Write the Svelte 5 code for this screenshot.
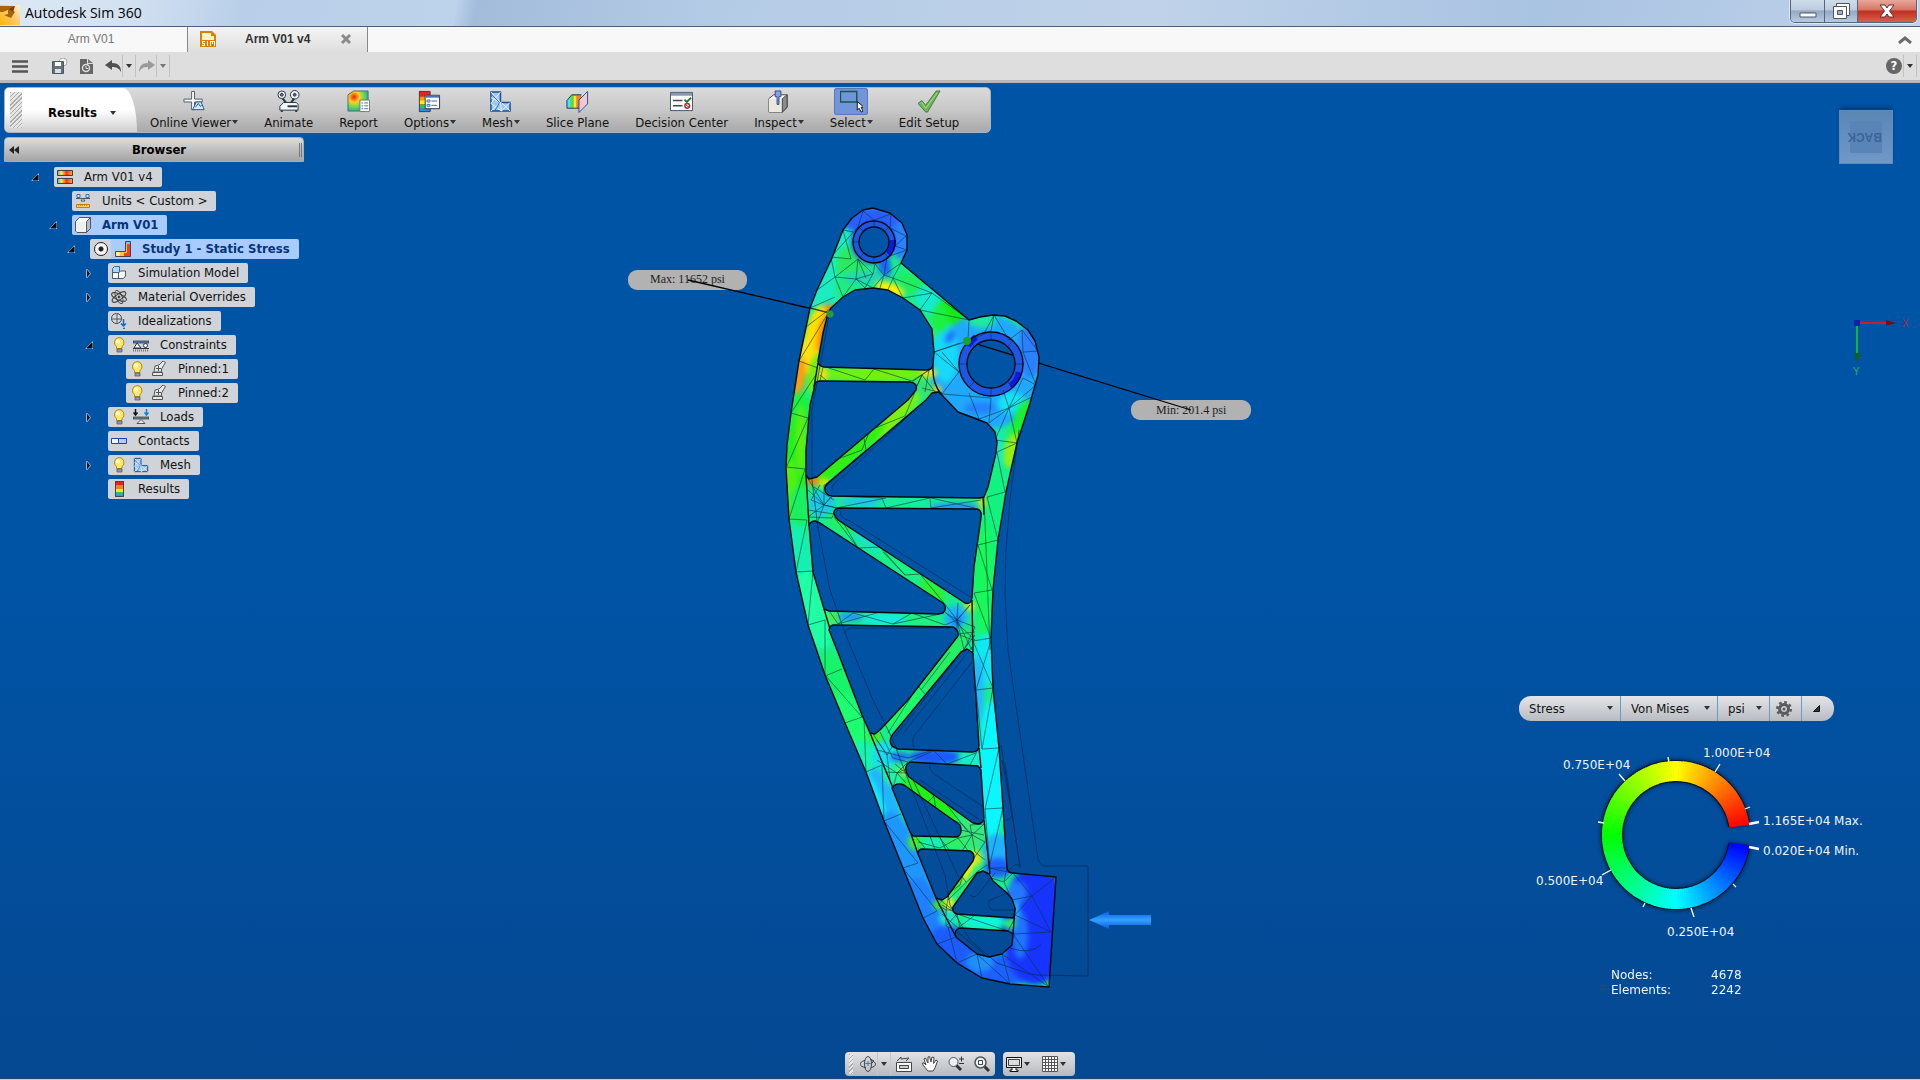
<script>
  const tools = [
    { label: 'Online Viewer', icon: 'viewer', menu: true },
    { label: 'Animate', icon: 'animate' },
    { label: 'Report', icon: 'report' },
    { label: 'Options', icon: 'options', menu: true },
    { label: 'Mesh', icon: 'mesh', menu: true },
    { label: 'Slice Plane', icon: 'slice' },
    { label: 'Decision Center', icon: 'decision' },
    { label: 'Inspect', icon: 'inspect', menu: true },
    { label: 'Select', icon: 'select', menu: true, active: true },
    { label: 'Edit Setup', icon: 'check' }
  ];

  const tree = [
    { label: 'Arm V01 v4', level: 0, icon: 'document', open: true },
    { label: 'Units < Custom >', level: 1, icon: 'units' },
    { label: 'Arm V01', level: 1, icon: 'body', open: true, selected: true },
    { label: 'Study 1 - Static Stress', level: 2, icon: 'study', open: true, selected: true, radio: true },
    { label: 'Simulation Model', level: 3, icon: 'simmodel', open: false },
    { label: 'Material Overrides', level: 3, icon: 'material', open: false },
    { label: 'Idealizations', level: 3, icon: 'ideal' },
    { label: 'Constraints', level: 3, icon: 'constraints', open: true, bulb: true },
    { label: 'Pinned:1', level: 4, icon: 'pinned', bulb: true },
    { label: 'Pinned:2', level: 4, icon: 'pinned', bulb: true },
    { label: 'Loads', level: 3, icon: 'loads', open: false, bulb: true },
    { label: 'Contacts', level: 3, icon: 'contacts' },
    { label: 'Mesh', level: 3, icon: 'mesh', open: false, bulb: true },
    { label: 'Results', level: 3, icon: 'results' }
  ];

  // Arm outline, then every opening in it
  const armOutline =
    'M843 230L852 218L863 210L873 208L890 213L902 223L907 235L907 250L901 263L969 320L980 317L993 315L1005 316L1016 321L1028 330L1035 341L1039 357L1038 375L1030 403L1017 443L1006 492L998 540L993 590L991 638L993 688L999 748L1003 808L1007 868Q1008 873 1013 873L1056 877L1049 987L1010 984L982 978L957 963L937 944L923 918L903 868L884 821L866 772L845 723L825 675L808 625L796 572L789 519L786 468L787 445L791 413L799 361L810 308L817 290L832 258Z';
  const armHoles = [
    'M831 308L843 297L855 290L873 288L888 290L903 298L920 310L932 329L934 352L933 365Q932 370 926 370L824 367Q818 366 818 361L823 333L828 313Z',
    'M814 389Q814 381 820 381L910 382Q918 383 916 390L908 400L817 477L809 479L806 475L806 450L810 405Z',
    'M932 393L939 392L958 412L987 423L995 432L997 442L996 453L988 487L984 497L980 498L832 496Q824 495 825 487L827 484L926 400Z',
    'M840 508L977 509Q982 510 981 518L974 567L972 598Q971 605 965 603L838 520Q831 512 836 509Z',
    'M809 525Q811 521 815 521L820 523L943 603Q948 608 943 613L938 614L829 611L824 609L813 572Z',
    'M829 630Q830 625 834 625L953 627Q959 630 958 636L908 700L880 730L875 734L870 733L862 715L837 650Z',
    'M973 653L967 649L961 652L893 734Q888 740 892 746L898 749L972 752Q979 752 979 745Z',
    'M910 762L978 766L981 770L984 818Q984 822 979 824L973 823L909 777Q902 767 910 762Z',
    'M892 788Q895 783 901 784L904 785L960 825Q963 834 957 837L913 836L910 832Z',
    'M918 854Q918 849 923 849L970 851Q976 854 973 861L947 897L942 900L936 898Z',
    'M983 871L989 874L993 881L1007 893L1012 899L1015 908L1014 918L957 914Q952 912 953 907L977 873Z',
    'M955 934Q956 928 961 928L1008 931L1013 934L1012 945L1002 954L989 957L977 954L957 938Z'
  ];
  const pins = [
    { x: 874, y: 242, inner: 15, outer: 21 },
    { x: 991, y: 364, inner: 24, outer: 32 }
  ];

  function circlePath(x, y, r) {
    return `M${x - r} ${y}a${r} ${r} 0 1 0 ${r * 2} 0a${r} ${r} 0 1 0 ${-r * 2} 0Z`;
  }

  const armShape = [armOutline, ...armHoles, ...pins.map((p) => circlePath(p.x, p.y, p.inner))].join('');

  // Stress field: x, y, rx, ry, colour, rotation
  const stress = [
    [832, 255, 30, 60, '#1cecc0', 20], [851, 265, 15, 20, '#2bea62', 0], [845, 285, 10, 14, '#20ec80', 20],
    [875, 220, 38, 13, '#2860ff', 0],
    [901, 240, 9, 20, '#2a80ff', 0], [873, 242, 22, 22, '#2454f4', 0], [885, 268, 6, 12, '#1d60ff', 0],
    [866, 278, 22, 7, '#22d8b0', 0], [912, 285, 16, 8, '#22ec58', 40], [930, 300, 16, 12, '#16ead0', 40],
    [890, 289, 15, 6, '#fff000', 20], [951, 313, 16, 9, '#14ec14', 40], [940, 332, 8, 8, '#28f060', 0],
    [985, 372, 54, 58, '#20a8ff', 0], [946, 355, 13, 28, '#16d8f8', 0], [950, 337, 4, 7, '#2070ff', 30],
    [982, 321, 14, 7, '#1eeaa0', 0], [940, 318, 8, 14, '#1df040', 0], [1030, 350, 12, 28, '#2a80ff', 0],
    [980, 408, 16, 6, '#2482ff', 0], [1012, 403, 14, 11, '#12e4f4', 0], [1022, 425, 10, 26, '#1cf030', 15],
    [1013, 450, 9, 18, '#94f010', 15], [999, 450, 5, 20, '#16ecc0', 0],
    [827, 313, 7, 9, '#ff7a10', 20], [816, 335, 11, 30, '#ffe000', 12], [823, 333, 5, 20, '#ff8a00', 12],
    [803, 358, 11, 20, '#ffe010', 12], [799, 378, 6, 20, '#ff9a10', 10], [814, 374, 6, 20, '#70f010', 10],
    [798, 418, 14, 26, '#1cf040', 5], [796, 460, 14, 40, '#20f020', 0], [801, 440, 5, 35, '#60ee10', 0],
    [790, 490, 8, 30, '#56f010', 0], [800, 505, 10, 20, '#18f060', 0], [799, 560, 14, 36, '#14f0b0', -8],
    [814, 610, 16, 40, '#20ffa4', -16], [836, 680, 14, 30, '#18f468', -22], [850, 722, 14, 30, '#1eff70', -22],
    [868, 765, 12, 26, '#18f4b0', -22], [885, 800, 12, 34, '#20b4ff', -22], [876, 800, 6, 28, '#14ecf8', -22],
    [906, 858, 17, 50, '#1e96ff', -22], [930, 915, 18, 40, '#1e80ff', -26], [957, 950, 30, 20, '#1c5cff', 40],
    [1000, 970, 40, 16, '#1c60ff', 0], [980, 962, 14, 10, '#1e90ff', 0],
    [994, 520, 12, 60, '#12f27e', 0], [984, 580, 9, 60, '#18f85a', 0], [985, 660, 12, 26, '#10e8f4', 0],
    [978, 690, 6, 34, '#22b8ff', 0], [992, 770, 14, 70, '#0cf6ff', 0], [997, 850, 14, 16, '#20b0ff', 0],
    [998, 868, 14, 10, '#1e60ff', 0], [1035, 925, 34, 60, '#1734ff', 0], [1017, 893, 10, 12, '#2478ff', 0],
    [1020, 935, 8, 24, '#1f74ff', 0], [1015, 910, 5, 10, '#1fb0ff', 0],
    [875, 374, 55, 8, '#72f010', 0], [823, 374, 5, 8, '#f0e010', 0], [929, 373, 8, 5, '#ffe010', 0],
    [925, 388, 8, 8, '#38e070', 0], [937, 390, 4, 5, '#ffd010', 0], [890, 420, 40, 9, '#7cf010', -41],
    [850, 453, 45, 9, '#30f010', -41], [813, 481, 6, 5, '#ff7a10', 0], [824, 483, 6, 5, '#c0e810', 0],
    [822, 504, 14, 13, '#1cc8e8', 0], [870, 502, 30, 5, '#20c4f0', 0], [915, 503, 40, 6, '#18eca0', 0],
    [955, 507, 25, 4, '#2490ff', 0], [982, 502, 4, 7, '#c8e810', 0], [840, 523, 16, 7, '#20f060', 33],
    [870, 542, 20, 7, '#18e4c8', 33], [900, 562, 24, 8, '#18f484', 33], [933, 590, 16, 7, '#2ef030', 40],
    [956, 618, 12, 13, '#20b0ff', 0], [957, 621, 4, 5, '#1868f0', 0], [970, 606, 5, 5, '#f0e010', 0],
    [966, 634, 8, 12, '#20dca0', 0],
    [850, 617, 14, 4, '#2490ff', 0], [833, 617, 6, 7, '#50e850', 0], [885, 619, 24, 6, '#18e8e0', 0],
    [925, 620, 20, 6, '#20f080', 0], [945, 660, 40, 8, '#24f060', -52], [905, 705, 30, 8, '#1cff60', -52],
    [875, 737, 7, 5, '#50f010', 0], [884, 755, 12, 14, '#18dcf0', 0], [935, 757, 26, 8, '#1c58ff', 0],
    [900, 757, 10, 5, '#1e70ff', 0], [970, 759, 12, 7, '#18ecd0', 0], [895, 775, 12, 11, '#28f0a0', 0],
    [904, 771, 5, 4, '#b0f010', 0], [930, 800, 35, 9, '#22f014', 38], [970, 833, 16, 16, '#38e878', 0],
    [955, 842, 12, 6, '#30f060', 0], [915, 842, 7, 8, '#40f020', 0], [933, 843, 12, 6, '#18f0b0', 0],
    [975, 858, 7, 8, '#d8e810', 0], [964, 873, 18, 6, '#f0f010', -55], [955, 885, 12, 5, '#40f020', -55],
    [949, 904, 5, 7, '#fff010', 0], [939, 905, 6, 5, '#40f020', 0], [948, 918, 9, 8, '#20e0c8', 0],
    [985, 922, 22, 6, '#10f4e0', 0], [1010, 924, 6, 6, '#30f060', 0]
  ];

  const meshLines = [
    // lugs
    'M843 230L851 259L831 257L858 227L863 211L874 220L891 214L890 228L906 236L895 246L907 250L887 257L884 275L901 263L893 278L932 293L920 310L969 320L932 293L903 298L893 278L888 290',
    'M831 258L835 277L817 290M835 277L843 297L856 279L835 277L858 259L856 279L865 288L873 274L856 279L873 288L884 275L893 278M858 259L873 274L875 264L884 275L880 288M843 230L853 232M858 259L866 278',
    'M810 308L835 297M802 330L831 308M810 308L829 313M799 361L827 315M799 361L818 368M791 413L817 373M791 413L808 418M787 466L808 418',
    'M969 320L968 341L934 352L960 343M934 352L959 372L942 394L991 398L989 423L1009 408L1036 385L1023 352L1038 351L1022 330L1009 340L994 315L991 331L968 341M1023 352L1022 330M994 315L984 334M959 372L942 352M969 393L979 419L1009 408L1017 443M1009 408L1023 378L1036 385M1009 408L1032 397M979 419L958 412M1009 408L995 440L1017 443M1009 408L1003 390',
    'M853 242h6M889 242h6M874 221v6M874 257v6M860 228l4 4M888 228l-4 4M860 257l4-4M888 257l-4-4M959 364h8M1015 364h8M991 332v8M991 388v8M969 341l6 6M1013 341l-6 6M969 387l6-6M1013 387l-6-6',
    // outer rail
    'M787 467L805 469L789 519L807 520L796 572L813 571L808 625L825 620L825 676L842 669M825 675L862 717L845 723M862 717L864 718L866 772L882 765L884 821L901 814M884 821L918 863L903 868L937 911L923 918M957 963L948 927M957 963L977 954L1010 984L1002 954L1049 987L1013 934L1051 932L1015 915L1032 896L1012 900M1051 932L1032 896L1056 877M1032 896L1013 873L1004 882L1012 900M982 978L977 954M937 944L956 937',
    // inner rail
    'M1017 443L997 452L1005 492L987 497L998 540L978 545L992 590L974 593L991 638L973 641L993 688L976 690L991 640M976 690L982 749L999 748L985 809L1003 808L989 868L1007 868L1004 882L991 878M982 749L993 688M985 809L990 868M984 497L990 650M1013 873L989 868',
    // ribs and their joints
    'M823 367L820 381M826 367L865 380L874 369L912 381L929 370M820 375L826 380M914 392L922 375L935 392M922 375L916 388M922 388L942 393M929 370L925 392M912 382L933 367M915 392L905 416L870 430L862 450L830 462M864 438L866 450L826 484',
    'M807 477L824 505L832 496L882 498L886 508L930 498L931 508L981 500M808 490L824 505L836 492M824 505L808 517L832 518L836 508L824 505L811 500L820 485M824 505L818 521M824 505L838 508M808 510L834 514M814 487L834 500M836 508L886 498M931 498L975 508M824 505L824 485L838 480',
    'M834 517L858 548L880 547L905 575L920 574L944 603M858 548L844 524M905 575L883 552M830 612L838 624L853 613L893 624L912 613L945 625L957 620L944 603M957 620L970 605L957 620L975 627L964 650L957 620L946 613M957 620L958 603M957 620L957 634L973 640M957 620L972 650M945 612L975 640M958 634L975 632M838 624L880 612M893 624L940 614',
    'M957 637L930 672L918 686L926 695M918 686L888 733M950 652L921 690M873 734L887 755L892 747L933 750L947 764L976 753M880 732L893 758L908 762M877 750L908 758L933 750M877 760L897 773L908 762M887 755L877 740M897 773L893 788M897 773L906 783M885 772L906 773L895 764M897 773L908 768M887 755L890 780M908 762L933 751M947 764L975 768M979 748L970 765',
    'M906 770L934 796L926 804M934 796L936 812L962 824L972 835L984 824L970 825L972 835L958 838L940 848L918 842M972 835L985 842L974 858L958 838M972 835L975 852L985 860M972 835L962 851M960 830L984 835M940 838L950 851M940 796L968 832M915 836L925 848',
    'M973 857L965 868L960 885L949 893L946 910L953 910L940 900M946 910L946 926L957 914L1008 931L1015 918M946 910L938 905M942 914L958 928L975 915M948 900L978 871L987 865M960 874L966 882M946 926L955 930M942 905L957 914L960 928'
  ];

  // Outline of the undeformed part
  const ghostLines = [
    'M1019 430L1010 500L1006 550L1005 593L1008 650L1037 852Q1038 866 1045 866L1088 866L1088 976L1037 975L1030 974L997 963L970 940L950 905L945 875L892 738L873 700L845 633L830 590L818 528L812 480L812 410L829 316',
    'M840 508Q838 517 850 521L972 598M832 490Q830 485 845 475L920 405M818 528L822 523M845 633Q846 628 852 628L950 628M972 662L915 735Q911 740 914 748M895 737L975 635M902 735L972 647M930 764Q928 772 940 778L982 806M920 780L980 820M1001 745L1020 866Q1015 862 1010 870M1002 760L1012 815Q1010 821 1006 820M913 780L960 880M970 895Q975 900 980 892L995 873M1007 893L990 900Q986 908 993 910L1014 910M955 930L985 955M1010 948Q1030 955 1041 945M1005 762L1020 868'
  ];

  const gauge = { cx: 156, cy: 95, r: 64, width: 20 };

  function gaugeSegments(count) {
    const from = 8;
    const to = 352;
    const step = (to - from) / count;
    const segments = [];
    for (let i = 0; i < count; i++) {
      const a = from + i * step;
      const b = Math.min(a + step + 0.6, to);
      const mid = a + step / 2;
      let hue = (mid / 90) * 60;
      if (mid < 90) hue = ((mid - from) / 82) * 60;
      if (mid > 270) hue = 180 + ((mid - 270) / 82) * 60;
      segments.push({ d: `M${polar(a)}A${gauge.r} ${gauge.r} 0 0 0 ${polar(b)}`, color: `hsl(${hue}, 100%, 50%)` });
    }
    return segments;
  }

  function polar(deg) {
    const rad = (deg * Math.PI) / 180;
    return `${(gauge.cx + gauge.r * Math.cos(rad)).toFixed(2)} ${(gauge.cy - gauge.r * Math.sin(rad)).toFixed(2)}`;
  }

  const ring = gaugeSegments(172);
  const gaugeLabels = [
    { x: 183, y: 17, text: '1.000E+04' },
    { x: 43, y: 29, text: '0.750E+04' },
    { x: 243, y: 85, text: '1.165E+04 Max.' },
    { x: 243, y: 115, text: '0.020E+04 Min.' },
    { x: 16, y: 145, text: '0.500E+04' },
    { x: 147, y: 196, text: '0.250E+04' }
  ];
</script>

{#snippet icon(name)}
  {#if name === 'viewer'}
    <svg class="tool-icon" viewBox="0 0 24 24"><path d="M9 1.500h3v8h8v3h-8v8H9v-8H1v-3h8z" fill="#fff" stroke="#4c5869" /><path d="M10 20.500l4-8h5l3 8z" fill="#dceaff" stroke="#2554a8" /><path d="M13 18l3-4 2 3 2-1" fill="none" stroke="#2554a8" /></svg>
  {:else if name === 'animate'}
    <svg class="tool-icon" viewBox="0 0 24 24" stroke="#263142"><circle cx="5" cy="5" r="4" fill="#eef2f8" /><circle cx="18.500" cy="5" r="4.500" fill="#eef2f8" /><circle cx="5" cy="5" r="1.500" fill="#64748c" /><circle cx="18.500" cy="5" r="1.500" fill="#64748c" /><path d="M6 9l4 5M18 9l-4 5" stroke-width="2" /><path d="M3 17l4-4h13l2 2v6H3z" fill="#f4f7fb" /><path d="M11 17h10" stroke-width="2" /><path d="M5 21v2M20 21v2" stroke-width="2" /></svg>
  {:else if name === 'report'}
    <svg class="tool-icon" viewBox="0 0 24 24"><defs><radialGradient id="reportHeat" cx=".3" cy=".3" r=".9"><stop offset="0" stop-color="#ee2010" /><stop offset=".3" stop-color="#ffd020" /><stop offset=".6" stop-color="#50d860" /><stop offset="1" stop-color="#2070e0" /></radialGradient></defs><path d="M1 5l6-4h15v17l-4 4H1z" fill="url(#reportHeat)" stroke="#56687c" /><path d="M13.500 10.500h10v12h-10z" fill="#fff" stroke="#777" /><path d="M15 13.500h2m1 0h4M15 16.500h2m1 0h4M15 19.500h2m1 0h4" stroke="#4a6ea0" /></svg>
  {:else if name === 'options'}
    <svg class="tool-icon" viewBox="0 0 24 24"><path d="M1 1h12v22H1z" fill="#e02820" /><path d="M1 7h12v5H1z" fill="#ff9800" /><path d="M1 11h12v4H1z" fill="#ffe820" /><path d="M1 15h12v4H1z" fill="#38c040" /><path d="M1 19h12v4H1z" fill="#2090e0" /><path d="M1.500 1.500h11v21h-11z" fill="none" stroke="#444" /><path d="M7.500 5.500h15v14h-15z" fill="#fff" stroke="#333" /><path d="M8 7h14" stroke="#4c75b8" stroke-width="2" /><path d="M9.500 10.500h3v2h-3zM9.500 15h3v2h-3zM14 11.500h6M14 16h6" fill="none" stroke="#3068b0" /></svg>
  {:else if name === 'mesh'}
    <svg class="tool-icon" viewBox="0 0 24 24"><path d="M2 2h10v11h10v9H2z" fill="#9cc8f4" stroke="#1e4c94" stroke-width="1.500" /><path d="M2 8l10 5-10 9M2 2l10 11 1 9 9-9M2 14l11 8M12 2L2 14M13 13l9 9" fill="none" stroke="#e8f4ff" /><path d="M3 5l8 8M11 13l-5 9" stroke="#2868b4" /></svg>
  {:else if name === 'slice'}
    <svg class="tool-icon" viewBox="0 0 24 24"><path d="M1 11l5-6h10v10l-3 4H1z" fill="#48c848" /><path d="M1 11l4-5v13H1z" fill="#50e0f0" /><path d="M5 6h3v13H5z" fill="#60d840" /><path d="M8 6h3v13H8z" fill="#ffe820" /><path d="M11 6h4v13h-4z" fill="#ff7830" /><path d="M1 11l5-6h10M1 11v8h13" fill="none" stroke="#203860" /><path d="M13.500 10.500l9-9v13l-9 9z" fill="#f8c8d0" fill-opacity=".85" stroke="#2848a8" /></svg>
  {:else if name === 'decision'}
    <svg class="tool-icon" viewBox="0 0 24 24"><path d="M.5 2.500h23v19H.5z" fill="#fff" stroke="#44506a" /><path d="M1 3h22v3H1z" fill="#8898b0" /><path d="M3 11h10M3 16.500h10" stroke="#404858" stroke-width="1.500" /><path d="M15 10l2.500 2.500L22 8" fill="none" stroke="#207828" stroke-width="2" /><circle cx="18" cy="16.500" r="2.500" fill="none" stroke="#c02828" stroke-width="1.500" /><path d="M16 15l4 3" stroke="#c02828" /></svg>
  {:else if name === 'inspect'}
    <svg class="tool-icon" viewBox="0 0 24 24"><path d="M2 9l5-4h14v13l-5 5H2z" fill="#fafafa" stroke="#444" /><path d="M2 9h14v14H2z" fill="#ece8e0" /><path d="M16 9l5-4v13l-5 5z" fill="#8c8c8c" stroke="#444" /><path d="M8.500 1h6v6h-2v8h-2V7h-2z" fill="#88a4e0" stroke="#304890" /></svg>
  {:else if name === 'select'}
    <svg class="tool-icon" viewBox="0 0 24 24"><path d="M.5 1.500h17v11H.5z" fill="none" stroke="#185844" stroke-width="1.500" /><path d="M18 12v9l2-2 2 4 2-1-2-4h3z" fill="#fff" stroke="#111" /></svg>
  {:else if name === 'check'}
    <svg class="tool-icon" viewBox="0 0 24 24"><path d="M0 14l4-3 4 5L19 1h4L10 23H8z" fill="#70b45c" stroke="#3c8038" /><path d="M3 14l1-1 4 6L20 3" fill="none" stroke="#a8d894" /></svg>
  {:else if name === 'document'}
    <svg class="tree-icon" viewBox="0 0 16 16"><path d="M.5 1.500h15v5H.5zM.5 9.500h15v5H.5z" fill="url(#heatBar)" stroke="#453a48" /></svg>
  {:else if name === 'units'}
    <svg class="tree-icon" viewBox="0 0 16 16"><path d="M2 1.500h3v3H2zM11 1.500h3v3h-3z" fill="#c8e8ff" stroke="#3070a8" /><path d="M1 5.500h14M8 5l-2 3h4z" fill="#eee" stroke="#555" /><path d="M1.500 11.500h13v3h-13z" fill="#ffd060" stroke="#c88010" /><path d="M3 12h10" stroke="#a86800" stroke-dasharray="1 1" /></svg>
  {:else if name === 'body'}
    <svg class="tree-icon" viewBox="0 0 16 16"><path d="M.5 4.500l4-4h11v11l-4 4H2l-1.500-1.500z" fill="#fff" stroke="#555" /><path d="M11.500 4.500l4-4v11l-4 4z" fill="#b8bcc4" stroke="#555" /><path d="M1 5h9v10H2z" fill="#eef0f2" /></svg>
  {:else if name === 'study'}
    <svg class="tree-icon" viewBox="0 0 16 16"><path d="M10 0h6v16H0v-6h10z" fill="#ffc040" /><path d="M12 2h3v13H9v-3h3z" fill="#f04020" /><path d="M1 11h4v4H1z" fill="#fff080" /><path d="M11 1h4v2h-4z" fill="#70c8f0" /><path d="M10.500.5h5v15H.5v-5h10z" fill="none" stroke="#503c50" /></svg>
  {:else if name === 'simmodel'}
    <svg class="tree-icon" viewBox="0 0 16 16"><path d="M1.500 3.500l2-2h5v6h-7z" fill="#a8d8fa" stroke="#346c98" /><path d="M1.500 7.500h6v6h-6zM7.500 8l2-2h5v5l-2 2.500h-5z" fill="#fff" stroke="#455a70" /></svg>
  {:else if name === 'material'}
    <svg class="tree-icon" viewBox="0 0 16 16" fill="none" stroke="#444"><ellipse cx="8" cy="8" rx="8" ry="3" transform="rotate(25 8 8)" /><ellipse cx="8" cy="8" rx="8" ry="3" transform="rotate(-35 8 8)" /><ellipse cx="8" cy="8" rx="3" ry="7" transform="rotate(-25 8 8)" /><circle cx="8" cy="8" r="1" fill="#222" /></svg>
  {:else if name === 'ideal'}
    <svg class="tree-icon" viewBox="0 0 16 16"><circle cx="5.500" cy="5.500" r="5" fill="#d8dce0" stroke="#444" /><path d="M1 6h10M6 1v10" stroke="#555" /><path d="M12.500 6v7M10 10.500l2.500 2.500 2.500-2.500M12 15.500h2" fill="none" stroke="#1868c0" stroke-width="1.500" /></svg>
  {:else if name === 'constraints'}
    <svg class="tree-icon" viewBox="0 0 16 16"><path d="M0 4h16v2H0z" fill="#5688c8" stroke="#223" stroke-width=".7" /><path d="M1 11l3-5 4 5z" fill="#fff" stroke="#333" /><circle cx="12.500" cy="8.500" r="2" fill="#fff" stroke="#333" /><path d="M0 11.500h16" stroke="#334" /><path d="M0 13.500h16" stroke="#777" stroke-width="2" stroke-dasharray="1 1" /></svg>
  {:else if name === 'pinned'}
    <svg class="tree-icon" viewBox="0 0 16 16"><path d="M1.500 11.500h10v3h-10zM3 11l1-6 4-1 4-4 2.500 1.500-4 6.500v3z" fill="#e8e8e8" stroke="#555" /><path d="M5 7.500h5M7.500 5v5" stroke="#555" /></svg>
  {:else if name === 'loads'}
    <svg class="tree-icon" viewBox="0 0 16 16"><path d="M2.500 0v5M.5 3.500l2 2.500 2-2.500" fill="none" stroke="#111" stroke-width="1.500" /><path d="M13.500 0v5M11.500 3.500l2 2.500 2-2.500" fill="none" stroke="#1880d8" stroke-width="1.500" /><path d="M0 8h16v2H0z" fill="#6f8697" stroke="#333" stroke-width=".7" /><path d="M8 10.500l-4 4h8z" fill="#eee" stroke="#555" /></svg>
  {:else if name === 'contacts'}
    <svg class="tree-icon" viewBox="0 0 16 16"><path d="M.5 5.500h7v5h-7z" fill="#f2f6ff" stroke="#1c44a0" /><path d="M7.500 5.500h8v5h-8z" fill="#b0ccf8" stroke="#1c44a0" /></svg>
  {:else if name === 'results'}
    <svg class="tree-icon" viewBox="0 0 16 16"><path d="M4 0h9v4H4z" fill="#d82820" /><path d="M4 4h9v4H4z" fill="#f88020" /><path d="M4 8h9v3H4z" fill="#f8e820" /><path d="M4 11h9v2H4z" fill="#40c040" /><path d="M4 13h9v3H4z" fill="#30a0d0" /><path d="M4.500.5h8v15h-8z" fill="none" stroke="#444" /></svg>
  {/if}
{/snippet}

<div class="app">
  <header class="titlebar">
    <svg class="app-logo" viewBox="0 0 20 20"><defs><linearGradient id="logo" x1="0" y1="1" x2="1" y2="0"><stop offset="0" stop-color="#ffb000" /><stop offset=".6" stop-color="#ffce78" /><stop offset="1" stop-color="#fff2d8" /></linearGradient></defs><path d="M0 0h20v20H0z" fill="url(#logo)" /><path d="M0 1h15l-3 4 3 2-4 6-7-3 4-1V5L3 7H0z" fill="#a86408" /><path d="M9 4l6-3-2 6z" fill="#70400c" /></svg>
    <h1>Autodesk Sim 360</h1>
    <div class="window-buttons">
      <button class="minimize" aria-label="Minimize"><svg width="18" height="6" viewBox="0 0 18 6"><path d="M1 1h16v4H1z" fill="#fff" stroke="#4c5566" /></svg></button>
      <button class="restore" aria-label="Restore"><svg width="18" height="18" viewBox="0 0 18 18"><path d="M4.500 1.500h13v12h-13z" fill="#fff" stroke="#4c5566" /><path d="M1.500 4.500h13v12h-13z" fill="#fff" stroke="#4c5566" /><path d="M5.500 8.500h5v4h-5z" fill="#9fb0c4" stroke="#4c5566" /></svg></button>
      <button class="close" aria-label="Close"><svg width="16" height="14" viewBox="0 0 16 14"><path d="M1 1h5l2 3 2-3h5l-4.500 6 4.500 6h-5L8 10l-2 3H1l4.500-6z" fill="#fff" stroke="#5a3038" /></svg></button>
    </div>
  </header>

  <nav class="tabs">
    <a class="tab" href="#arm-v01">Arm V01</a>
    <div class="tab active">
      <svg width="16" height="16" viewBox="0 0 16 16"><path d="M0 0h12l4 4v12H0z" fill="#d88008" /><path d="M2 2h9v3h3v4H2z" fill="#fff0c0" /><path d="M2 10.500h3M2.500 10v3M2 12.500h3M4.500 12v3M2 14.500h3M7.500 10v5M10.500 15v-5M10 10.500h4M12.500 11v2M14.500 10v5" stroke="#fff" /></svg>
      <a href="#arm-v01-v4">Arm V01 v4</a>
      <button aria-label="Close tab"><svg width="10" height="10" viewBox="0 0 10 10"><path d="M1 1l8 8M9 1L1 9" stroke="#8a8a8a" stroke-width="3" /></svg></button>
    </div>
    <button class="collapse" aria-label="Collapse ribbon"><svg width="14" height="8" viewBox="0 0 14 8"><path d="M1 7l6-5 6 5" fill="none" stroke="#6c6c6c" stroke-width="3" /></svg></button>
  </nav>

  <div class="quickbar">
    <button class="menu" aria-label="Application menu"><svg width="16" height="13" viewBox="0 0 16 13"><path d="M0 1.500h16M0 6.500h16M0 11.500h16" stroke="#555" stroke-width="2.500" /></svg></button>
    <button aria-label="Save"><svg width="16" height="16" viewBox="0 0 16 16"><circle cx="11" cy="4" r="4" fill="#f8f8f8" stroke="#aaa" /><path d="M.5 3.500h11v12H.5z" fill="#647080" stroke="#4c5664" /><path d="M3 4h6v4H3z" fill="#fff" /><path d="M3 11h6v4H3z" fill="#d8dde4" /></svg></button>
    <button aria-label="Version history"><svg width="13" height="15" viewBox="0 0 13 15"><path d="M0 0h7v5h6v10H0z" fill="#666" /><path d="M8 0l5 4H8z" fill="#777" /><circle cx="6" cy="9" r="3.500" fill="none" stroke="#ddd" stroke-width="1.500" /><path d="M6 7v2.500h2" fill="none" stroke="#ddd" /></svg></button>
    <button aria-label="Undo"><svg width="16" height="12" viewBox="0 0 16 12"><path d="M0 5l7-5v3c6 0 9 3 9 9-2-4-5-5-9-5v3z" fill="#505050" /></svg></button>
    <button class="split" aria-label="Undo list"><span class="caret"></span></button>
    <button aria-label="Redo"><svg width="16" height="12" viewBox="0 0 16 12"><path d="M16 5L9 0v3C3 3 0 6 0 12c2-4 5-5 9-5v3z" fill="#9a9a9a" /></svg></button>
    <button class="split" aria-label="Redo list"><span class="caret muted"></span></button>
    <button class="help" aria-label="Help">?</button>
    <button class="split" aria-label="Help menu"><span class="caret"></span></button>
  </div>

  <main class="workspace">
    <div class="toolbar">
      <span class="grip"></span>
      <button class="mode">Results <span class="caret"></span></button>
      <div class="tools">
        {#each tools as tool}
          <button class="tool" class:active={tool.active}>
            <span class="tool-picture">{@render icon(tool.icon)}</span>
            <span class="tool-label">{tool.label}{#if tool.menu}<span class="caret"></span>{/if}</span>
          </button>
        {/each}
      </div>
    </div>

    <aside class="browser">
      <div class="browser-header">
        <button aria-label="Collapse browser"><svg width="10" height="8" viewBox="0 0 10 8"><path d="M5 0v8L0 4zM10 0v8L5 4z" fill="#222" /></svg></button>
        <h2>Browser</h2>
        <span class="resize"></span>
      </div>
      <ul class="tree">
        {#each tree as node}
          <li style="padding-left: {node.level * 18}px">
            <span class="twisty">
              {#if node.open === true}
                <svg width="8" height="8" viewBox="0 0 8 8"><path d="M8 0v8H0z" fill="#9fb4c8" /><path d="M7 2v5H2z" fill="#000" stroke="#101418" /></svg>
              {:else if node.open === false}
                <svg width="7" height="11" viewBox="0 0 7 11"><path d="M1.500 1.500v8h1l3-4-3-4z" fill="#181c24" stroke="#9fb4c8" /></svg>
              {/if}
            </span>
            <div class="chip" class:selected={node.selected} class:with-radio={node.radio}>
              {#if node.radio}
                <input type="radio" name="study" id="study-1" checked />
              {/if}
              {#if node.bulb}
                <svg class="tree-icon" viewBox="0 0 16 16"><path d="M8 .5a5 5 0 0 1 3 9v2H5.500v-2A5 5 0 0 1 8 .5z" fill="#ffe96a" stroke="#b08a20" /><circle cx="7" cy="4.500" r="2" fill="#fffbd0" /><path d="M6 12h5v3H6z" fill="#999" stroke="#555" stroke-width=".7" /></svg>
              {/if}
              {@render icon(node.icon)}
              {#if node.radio}
                <label for="study-1">{node.label}</label>
              {:else}
                <span>{node.label}</span>
              {/if}
            </div>
          </li>
        {/each}
      </ul>
    </aside>

    <svg class="model" viewBox="572 190 680 810">
      <defs>
        <linearGradient id="heatBar"><stop offset="0" stop-color="#30b8f0" /><stop offset=".25" stop-color="#ffe860" /><stop offset=".6" stop-color="#f03820" /><stop offset="1" stop-color="#ffb030" /></linearGradient>
        <linearGradient id="loadArrow" x1="0" y1="0" x2="0" y2="1"><stop offset="0" stop-color="#0a58dc" /><stop offset=".5" stop-color="#32a2ff" /><stop offset="1" stop-color="#0a58dc" /></linearGradient>
        <clipPath id="armClip"><path d={armShape} clip-rule="evenodd" /></clipPath>
        <filter id="blend" x="-10%" y="-10%" width="120%" height="120%" color-interpolation-filters="sRGB"><feGaussianBlur stdDeviation="2.5" /></filter>
      </defs>

      <g class="callout">
        <rect x="628" y="270" width="119" height="20" rx="9" />
        <rect x="1131" y="400" width="120" height="20" rx="9" />
        <text x="650" y="283">Max: 11652 psi</text>
        <text x="1156" y="414">Min: 201.4 psi</text>
        <path d="M688 280L830 313M967 341L1191 410" />
      </g>

      <g clip-path="url(#armClip)">
        <path d="M780 200h290v795H780z" fill="#1aee8c" />
        <g filter="url(#blend)">
          {#each stress as [x, y, rx, ry, color, angle]}
            <ellipse cx={x} cy={y} {rx} {ry} fill={color} transform="rotate({angle} {x} {y})" />
          {/each}
        </g>
        {#each pins as pin}
          <circle cx={pin.x} cy={pin.y} r={(pin.inner + pin.outer) / 2} fill="none" stroke="#1c58e4" stroke-width={pin.outer - pin.inner} />
        {/each}
        <path d="M1010 386Q1017 382 1019 372M968 346Q970 342 976 337M888 254Q893 250 893 240" fill="none" stroke="#1018e8" stroke-width="6" />
        <path class="mesh" d={meshLines.join('')} />
      </g>
      <path class="ghost" d={ghostLines.join('')} />
      <path class="edges" d={armShape} />
      <path class="edges" d="M933 366Q932 384 942 395M806 475L809 525M824 609L830 629M984 515L983 497M972 600L973 652M981 768L979 748M870 733L893 788M984 820L990 874M911 834L918 854M936 898L956 937M1015 908L1013 934M818 363L814 387" />
      {#each pins as pin}
        <circle class="edges" cx={pin.x} cy={pin.y} r={pin.outer} />
      {/each}
      <path class="edges faint" d="M810 308L830 313" />
      <circle cx="830" cy="314" r="3.500" fill="#2c9840" />
      <circle cx="967" cy="341" r="4" fill="#16a820" />
      <path d="M1089 920l20-9v4h42v10h-42v4z" fill="url(#loadArrow)" />
    </svg>

    <section class="side">
      <button class="viewcube"><span>BACK</span></button>

      <svg class="triad" viewBox="0 0 80 70">
        <path d="M17 13h30" stroke="#c82028" stroke-width="2" />
        <path d="M46 10l10 3-10 3z" fill="#701018" />
        <path d="M17 15v30" stroke="#18b038" stroke-width="2" />
        <path d="M14 43l3 10 4-10z" fill="#0e6020" />
        <path d="M14 10h6v6h-6z" fill="#1020b0" />
        <text x="62" y="17" fill="#a82848">X</text>
        <text x="13" y="65" fill="#18b860">Y</text>
      </svg>

      <div class="legend">
        <div class="legend-bar">
          <span class="picker quantity"><select aria-label="Result"><option>Stress</option></select></span>
          <span class="picker component"><select aria-label="Component"><option>Von Mises</option></select></span>
          <span class="picker unit"><select aria-label="Unit"><option>psi</option></select></span>
          <button class="settings" aria-label="Legend settings">
            <svg width="16" height="16" viewBox="0 0 16 16"><circle cx="8" cy="8" r="4.500" fill="none" stroke="#5a5a5a" stroke-width="3" /><circle cx="8" cy="8" r="6.800" fill="none" stroke="#5a5a5a" stroke-width="2.400" stroke-dasharray="2.670 2.670" /><circle cx="8" cy="8" r="1.500" fill="#5a5a5a" /></svg>
          </button>
          <button class="fold" aria-label="Collapse legend"><svg width="7" height="7" viewBox="0 0 7 7"><path d="M6.500.5v6h-6z" fill="#333" stroke="#111" /></svg></button>
        </div>
        <svg class="gauge" viewBox="0 0 400 200">
          <circle cx={gauge.cx} cy={gauge.cy} r={gauge.r} class="ring-shadow" stroke-width={gauge.width + 2} pathLength="360" stroke-dasharray="343 17" stroke-dashoffset="-8.500" />
          {#each ring as segment}
            <path d={segment.d} fill="none" stroke={segment.color} stroke-width={gauge.width} />
          {/each}
          <path class="ticks" d="M148 17l1 5M99 34l6 7M200 24l-5 8M230 67l-5 2M213 144l3 3M171 168l3 9M125 163l-2 4M91 130l-9 5M78 82l6 1" />
          <path class="ticks major" d="M229 84l10-2M229 107l10 2" />
          {#each gaugeLabels as label}
            <text x={label.x} y={label.y}>{label.text}</text>
          {/each}
        </svg>
        <dl class="counts">
          <dt>Nodes:</dt>
          <dd>4678</dd>
          <dt>Elements:</dt>
          <dd>2242</dd>
        </dl>
      </div>
    </section>

    <div class="navbar">
      <div class="nav-group">
        <span class="grip small"></span>
        <button class="first" aria-label="Orbit"><svg width="16" height="16" viewBox="0 0 16 16" fill="none" stroke="#444"><ellipse cx="8" cy="8" rx="3.500" ry="7.500" /><path d="M5 4.500C-2 6-1 11 6 11.500M11 4.500c6 1.500 6 6 0 7" /><path d="M8 5v5M5.500 7.500h5" stroke="#2080d8" /><path d="M10 3l4 2-3 3" /></svg></button>
        <button class="drop" aria-label="Orbit options"><span class="caret"></span></button>
        <button aria-label="Look at"><svg width="16" height="16" viewBox="0 0 16 16" fill="none" stroke="#444"><path d="M.5 6.500h15v9H.5z" fill="#fff" /><path d="M3.500 9.500h9v3h-9z" fill="#ccc" /><path d="M1 5l4-4v2l8-1-3 3" /></svg></button>
        <button aria-label="Pan"><svg width="16" height="16" viewBox="0 0 16 16"><path d="M6 15L1 9 .5 7 2 7l2 2-2-6L3.500 2 6 7V1l1.500-.5L9 6l1-5 2 .5-.5 6L14 4l1.500 1L13 12l-2 3z" fill="#fff" stroke="#444" /></svg></button>
        <button aria-label="Zoom"><svg width="16" height="16" viewBox="0 0 16 16"><path d="M8 9l5 5" stroke="#333" stroke-width="3" /><circle cx="5.500" cy="6" r="4.500" fill="#e8f2f8" stroke="#555" /><path d="M11 3h5M13.500.5v5M11 7.500h5" stroke="#333" /></svg></button>
        <button aria-label="Fit"><svg width="16" height="16" viewBox="0 0 16 16"><path d="M10 10l5 5" stroke="#333" stroke-width="3" /><circle cx="6.500" cy="6.500" r="5.500" fill="#e8f2f8" stroke="#555" stroke-width="1.500" /><path d="M4.500 4.500h4v4h-4z" fill="#fff" stroke="#444" /></svg></button>
      </div>
      <div class="nav-group">
        <button class="display" aria-label="Display settings"><svg width="16" height="16" viewBox="0 0 16 16"><path d="M.5 1.500h15v10H.5z" fill="#eee" stroke="#111" /><path d="M2.500 3.500h11v6h-11z" fill="#ddd" stroke="#444" /><path d="M6 12v2H4v1.500h8V14h-2v-2" fill="#fff" stroke="#111" /></svg><span class="caret"></span></button>
        <button class="display" aria-label="Grid settings"><svg width="16" height="16" viewBox="0 0 16 16"><path d="M.5.5h15v15H.5zM3.500 0v16M6.500 0v16M9.500 0v16M12.500 0v16M0 3.500h16M0 6.500h16M0 9.500h16M0 12.500h16" fill="#fff" stroke="#555" /></svg><span class="caret"></span></button>
      </div>
    </div>
  </main>
  <footer class="strip"></footer>
</div>

<style>
  :global(body) {
    margin: 0;
    background: #0054a6;
  }

  .app {
    min-height: 100vh;
    display: flex;
    flex-direction: column;
    font-family: "DejaVu Sans Condensed", "Noto Sans", sans-serif;
    font-size: 13px;
    line-height: 16px;
    color: #111;
  }

  button {
    border: 0;
    padding: 0;
    background: none;
    font: inherit;
    color: inherit;
  }

  svg {
    display: block;
    flex: none;
  }

  .caret {
    display: inline-block;
    border: 3px solid transparent;
    border-top: 4px solid #333;
    border-bottom: 0;
  }

  .caret.muted {
    border-top-color: #777;
  }

  /* Window chrome */
  .titlebar {
    height: 26px;
    display: flex;
    align-items: center;
    background: linear-gradient(100deg, #dce8f4 0, #d2e1f1 130px, #b9cfe9 240px, #bdd2eb 450px, #a2bcda 470px, #b4cbe6 700px, #bfd2e9 60%, #a9c3e2 80%, #bfd2ea 100%);
    border-bottom: 1px solid #4e6080;
  }

  .app-logo {
    width: 20px;
    height: 20px;
    margin-top: 3px;
  }

  h1 {
    margin: 0 0 0 5px;
    font: 400 14px/20px "Open Sans", sans-serif;
    color: #000;
  }

  .window-buttons {
    display: flex;
    align-self: flex-start;
    height: 22px;
    margin-left: auto;
    margin-right: 3px;
    border: 1px solid #56657c;
    border-top: 0;
    border-radius: 0 0 5px 5px;
    overflow: hidden;
    box-shadow: 0 0 0 1px #dce8f4;
  }

  .window-buttons button {
    display: flex;
    align-items: center;
    justify-content: center;
    background: linear-gradient(#d0dcea 0, #bccbdd 45%, #93a8c2 50%, #b8cbe0 100%);
    border-right: 1px solid #56657c;
  }

  .minimize {
    width: 34px;
    padding-top: 8px;
  }

  .restore {
    width: 33px;
  }

  .window-buttons .close {
    width: 58px;
    border: 0;
    background: linear-gradient(#e8a898 0, #d87464 45%, #c03020 50%, #d86048 100%);
  }

  .tabs {
    height: 25px;
    display: flex;
    background: #f8f8f8;
    font: 12px/24px "Liberation Sans", sans-serif;
  }

  .tab {
    width: 187px;
    text-align: center;
    text-decoration: none;
    color: #777;
    text-indent: -5px;
  }

  .tab.active {
    width: 181px;
    display: flex;
    align-items: center;
    box-sizing: border-box;
    padding: 0 0 2px 12px;
    background: linear-gradient(#f4f4f4, #dedede);
    border-left: 1px solid #888;
    border-right: 1px solid #888;
    text-indent: 0;
  }

  .tab.active a {
    margin: 0 31px 0 29px;
    font-weight: 700;
    color: #333;
    text-decoration: none;
  }

  .collapse {
    margin-left: auto;
    margin-right: 8px;
  }

  .quickbar {
    height: 28px;
    display: flex;
    align-items: center;
    background: #dedede;
    border-bottom: 3px solid #b8b8b8;
  }

  .quickbar button {
    margin-right: 9px;
  }

  .quickbar .menu {
    margin: 0 24px 0 12px;
  }

  .quickbar button:nth-child(2),
  .quickbar button:nth-child(3) {
    margin-right: 12px;
  }

  .quickbar button:nth-child(4),
  .quickbar button:nth-child(6) {
    margin-right: 1px;
  }

  .quickbar .split {
    width: 14px;
    height: 22px;
    margin-right: 3px;
    border: solid #c2c2c2;
    border-width: 0 1px;
    display: flex;
    align-items: center;
    justify-content: center;
  }

  .quickbar .help {
    width: 16px;
    height: 16px;
    margin: 0 1px 0 auto;
    border-radius: 8px;
    background: #666;
    color: #fff;
    font-weight: 700;
    line-height: 16px;
  }

  /* Canvas with its docked panels */
  .workspace {
    flex: 1;
    display: grid;
    grid-template-columns: 304px 1fr 400px;
    grid-template-rows: 54px 1fr auto;
    background: linear-gradient(#0054a6 0, #0054a6 50%, #054892 100%);
  }

  .toolbar {
    grid-area: 1 / 1 / 2 / 3;
    justify-self: start;
    display: flex;
    height: 44px;
    margin: 4px 0 0 4px;
    padding-right: 18px;
    border: 1px solid #a8b4c4;
    border-radius: 5px;
    background: linear-gradient(#dadada, #c8c8c8 50%, #a8a8a8);
  }

  .grip {
    width: 12px;
    margin: 4px 0 4px 5px;
    background: repeating-linear-gradient(135deg, #aaa 0 1px, #e6e6e6 1px 3px);
  }

  .toolbar .grip {
    z-index: 1;
  }

  .mode {
    width: 132px;
    margin-left: -17px;
    padding: 5px 0 0 22px;
    border-radius: 4px 14px 0 4px / 4px 44px 0 4px;
    background: linear-gradient(#fff 50%, #d0d0d0);
    font-weight: 700;
    color: #000;
  }

  .mode .caret {
    margin: 0 0 2px 9px;
  }

  .tools {
    display: flex;
  }

  .tool {
    display: flex;
    flex-direction: column;
    align-items: center;
    padding: 0 13px;
  }

  .tool-picture {
    display: flex;
    justify-content: center;
    width: 34px;
    height: 27px;
    box-sizing: border-box;
    padding-top: 2px;
    border-radius: 3px;
  }

  .tool.active .tool-picture {
    background: #7294da;
    box-shadow: inset 0 0 0 1px #5878b8;
  }

  .tool-icon {
    width: 23px;
    height: 23px;
  }

  .tool-label .caret {
    margin: 0 0 3px 1px;
  }

  .tool-label {
    line-height: 15px;
    white-space: nowrap;
  }

  .browser {
    grid-area: 2 / 1 / 3 / 2;
    margin-left: 4px;
  }

  .browser-header {
    display: flex;
    align-items: center;
    height: 23px;
    border: 1px solid #a8b0b8;
    border-radius: 4px 4px 0 0;
    background: linear-gradient(#dcdcdc, #a4a4a4);
  }

  .browser-header button {
    margin-left: 4px;
  }

  h2 {
    flex: 1;
    margin: 0;
    font-size: 13px;
    text-align: center;
    color: #000;
  }

  .resize {
    width: 1px;
    height: 14px;
    margin-right: 1px;
    border: solid #777;
    border-width: 0 1px;
  }

  .tree {
    margin: 5px 0 0;
    padding: 0 0 0 27px;
    list-style: none;
  }

  .tree li {
    display: flex;
    align-items: center;
    height: 20px;
    margin-bottom: 4px;
  }

  .twisty {
    width: 23px;
  }

  .chip {
    display: flex;
    align-items: center;
    gap: 6px;
    height: 20px;
    padding: 0 9px 0 3px;
    border-radius: 2px;
    background: #d0d3d8;
    white-space: nowrap;
  }

  .chip span,
  .chip label {
    margin-left: 5px;
  }

  .chip.selected {
    background: #a8ccff;
    color: #073478;
    font-weight: 700;
  }

  .chip.with-radio {
    background: linear-gradient(90deg, #d0d3d8 21px, #a8ccff 21px);
  }

  .tree-icon,
  .chip .tool-icon {
    width: 16px;
    height: 16px;
  }

  .chip input {
    appearance: none;
    width: 14px;
    height: 14px;
    margin: 0 1px;
    border: 1px solid #222;
    border-radius: 7px;
    background: radial-gradient(circle, #222 0 2px, #f4f4f4 3px);
  }

  /* Part */
  .model {
    grid-area: 2 / 2 / 3 / 3;
    justify-self: center;
    width: 100%;
    max-width: 680px;
    margin-top: 53px;
  }

  .mesh {
    fill: none;
    stroke: #06343c;
    stroke-opacity: .65;
    stroke-width: .9;
  }

  .ghost {
    fill: none;
    stroke: #042a5c;
    stroke-opacity: .7;
  }

  .edges {
    fill: none;
    stroke: #020a10;
    stroke-width: 1.4;
    stroke-linejoin: round;
  }

  .faint {
    stroke-opacity: .5;
  }

  .callout rect {
    fill: #b2b2b2;
  }

  .callout text {
    font: 12px "Liberation Serif", serif;
    fill: #222;
  }

  .callout path {
    stroke: #000;
    stroke-width: 1.3;
  }

  /* View cube, axes and legend */
  .side {
    grid-area: 1 / 3 / 4 / 4;
    display: flex;
    flex-direction: column;
    align-items: flex-end;
    padding: 27px 0 80px;
  }

  .viewcube {
    width: 54px;
    height: 54px;
    margin-right: 27px;
    padding: 10px;
    border: 1px solid #5c8cc0;
    background: linear-gradient(#5a86b4, #7098c8);
    box-shadow: 0 -4px 4px -1px #043c78;
  }

  .viewcube span {
    display: block;
    background: #5884b8;
    color: #3c6494;
    font: 700 12px/32px "Liberation Sans", sans-serif;
    transform: rotate(180deg);
  }

  .triad {
    width: 80px;
    height: 70px;
    margin-top: 146px;
  }

  .triad text {
    font: 10px "Liberation Sans", sans-serif;
  }

  .legend {
    width: 401px;
    margin-top: auto;
  }

  .legend-bar {
    display: flex;
    width: 315px;
    height: 25px;
    border-radius: 12px;
    overflow: hidden;
    background: linear-gradient(#e4e5e8, #b8bbc2);
  }

  .legend-bar > * {
    box-sizing: border-box;
    border-right: 1px solid #6c98c4;
  }

  .picker {
    position: relative;
  }

  .picker::after {
    content: "";
    position: absolute;
    top: 10px;
    right: 7px;
    border: 3px solid transparent;
    border-top: 4px solid #333;
    border-bottom: 0;
    pointer-events: none;
  }

  .picker select {
    appearance: none;
    width: 100%;
    height: 25px;
    padding: 0 0 0 10px;
    border: 0;
    background: none;
    font: inherit;
    color: #111;
  }

  .quantity {
    width: 102px;
  }

  .component {
    width: 97px;
  }

  .unit {
    width: 52px;
  }

  .settings {
    width: 32px;
    padding-left: 6px;
  }

  .legend-bar .fold {
    width: 32px;
    padding-left: 11px;
    border: 0;
  }

  .gauge {
    width: 400px;
    height: 200px;
    margin: 19px 0 0 1px;
  }

  .gauge text {
    font: 12px "DejaVu Sans", sans-serif;
    fill: #eef4fa;
  }

  .ring-shadow {
    fill: none;
    stroke: #04142c;
    filter: drop-shadow(0 0 2px #04142c);
  }

  .ticks {
    stroke: #fff;
    stroke-width: 1.3;
  }

  .ticks.major {
    stroke-width: 2.5;
  }

  .counts {
    display: grid;
    grid-template-columns: 100px auto;
    margin: 28px 0 0 92px;
    font: 12px/15px "DejaVu Sans", sans-serif;
    color: #eef4fa;
  }

  dd {
    margin: 0;
  }

  /* Navigation */
  .navbar {
    grid-area: 3 / 1 / 4 / -1;
    justify-self: center;
    display: flex;
    gap: 8px;
    margin-bottom: 2px;
  }

  .nav-group {
    display: flex;
    align-items: center;
    height: 24px;
    border-radius: 4px;
    background: linear-gradient(#e2e3e6, #b6b9be);
  }

  .nav-group button {
    margin: 0 5px;
  }

  .nav-group .first {
    margin: 0 1px 0 4px;
  }

  .nav-group .drop {
    width: 14px;
    height: 24px;
    margin: 0;
    border: solid #c4c6ca;
    border-width: 0 1px;
    display: flex;
    align-items: center;
    justify-content: center;
  }

  .nav-group .display {
    display: flex;
    align-items: center;
    gap: 2px;
    width: 30px;
    margin: 0 3px;
  }

  .grip.small {
    width: 4px;
    height: 20px;
    margin: 0 3px 0 4px;
  }

  .strip {
    height: 1px;
    border-top: 1px solid #24446c;
    background: #bcc8dc;
  }
</style>
